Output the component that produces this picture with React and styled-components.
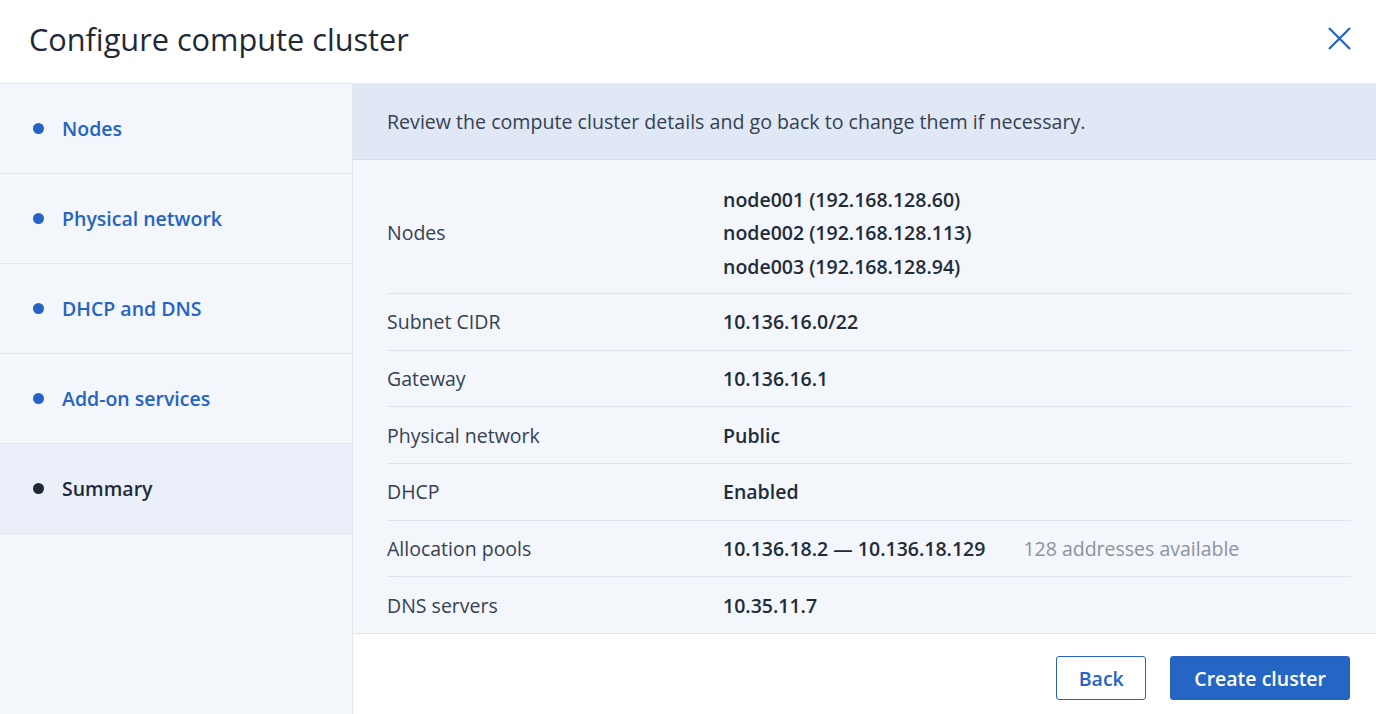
import React from 'react';
import styled, { createGlobalStyle } from 'styled-components';

const GlobalStyle = createGlobalStyle`
  html, body {
    margin: 0;
    padding: 0;
    background: #ffffff;
  }
  body {
    font-family: "Open Sans", "Noto Sans", sans-serif;
    color: #243040;
  }
`;

const Dialog = styled.div`
  width: 1376px;
  height: 714px;
  display: flex;
  flex-direction: column;
  background: #ffffff;
  overflow: hidden;
`;

const Header = styled.header`
  height: 84px;
  flex: 0 0 84px;
  box-sizing: border-box;
  display: flex;
  align-items: center;
  justify-content: space-between;
  padding: 0 25px 6px 29px;
  border-bottom: 1px solid #dfe6f0;
`;

const Title = styled.h1`
  margin: 0;
  font-size: 30.7px;
  font-weight: 400;
  color: #1f2937;
`;

const CloseButton = styled.button`
  border: 0;
  background: transparent;
  padding: 0;
  width: 24px;
  height: 24px;
  display: flex;
  align-items: center;
  justify-content: center;
  cursor: pointer;
`;

const Body = styled.div`
  flex: 1;
  display: flex;
  min-height: 0;
`;

const Sidebar = styled.nav`
  width: 352px;
  flex: 0 0 352px;
  background: #f3f6fb;
  border-right: 1px solid #dfe6f0;
  display: flex;
  flex-direction: column;
`;

const Step = styled.div`
  height: 89px;
  display: flex;
  align-items: center;
  gap: 18px;
  padding-left: 33px;
  border-bottom: 1px solid #dfe6f0;
  background: ${(p) => (p.$active ? '#eaeff9' : 'transparent')};
  color: ${(p) => (p.$active ? '#1f2937' : '#2563c4')};
  font-size: 19.5px;
  font-weight: 600;
`;

const Dot = styled.span`
  width: 11px;
  height: 11px;
  border-radius: 50%;
  background: currentColor;
`;

const Main = styled.section`
  flex: 1;
  display: flex;
  flex-direction: column;
  min-width: 0;
`;

const Banner = styled.div`
  height: 75px;
  flex: 0 0 75px;
  display: flex;
  align-items: center;
  padding-left: 34px;
  background: #dfe8f4;
  border-bottom: 1px solid #cfdcee;
  font-size: 19.6px;
  color: #354152;
`;

const Details = styled.div`
  flex: 1;
  background: #f3f6fb;
  padding: 16px 25px 0 34px;
  border-bottom: 1px solid #dfe6f0;
`;

const Row = styled.div`
  display: grid;
  grid-template-columns: 336px 1fr;
  align-items: center;
  min-height: ${(p) => (p.$tall ? '113px' : '55.67px')};
  padding-bottom: ${(p) => (p.$tall ? '4px' : '0')};
  border-bottom: ${(p) => (p.$last ? 'none' : '1px solid #dde5f0')};
  font-size: 19.5px;
`;

const Label = styled.div`
  color: #354152;
`;

const Value = styled.div`
  display: flex;
  flex-direction: column;
  gap: 6.5px;
  line-height: 27px;
  color: #222b38;
  font-weight: 600;
`;

const Line = styled.div`
  display: flex;
  gap: 38px;
`;

const Muted = styled.span`
  color: #8a93a0;
  font-weight: 400;
`;

const Footer = styled.footer`
  height: 80px;
  flex: 0 0 80px;
  box-sizing: border-box;
  display: flex;
  align-items: flex-end;
  justify-content: flex-end;
  gap: 24px;
  padding: 0 26px 14px 0;
  background: #ffffff;
`;

const Button = styled.button`
  height: 44px;
  padding: 0 ${(p) => (p.$primary ? '23px' : '21.5px')};
  border-radius: 3px;
  border: 1px solid #2563c4;
  background: ${(p) => (p.$primary ? '#2566c4' : '#ffffff')};
  color: ${(p) => (p.$primary ? '#ffffff' : '#2563c4')};
  font-family: inherit;
  font-size: 19.5px;
  font-weight: 600;
  cursor: pointer;
`;

const steps = ['Nodes', 'Physical network', 'DHCP and DNS', 'Add-on services', 'Summary'];

const rows = [
  { label: 'Subnet CIDR', value: '10.136.16.0/22' },
  { label: 'Gateway', value: '10.136.16.1' },
  { label: 'Physical network', value: 'Public' },
  { label: 'DHCP', value: 'Enabled' },
  { label: 'Allocation pools', value: '10.136.18.2 — 10.136.18.129', note: '128 addresses available' },
  { label: 'DNS servers', value: '10.35.11.7' },
];

export default function App() {
  return (
    <>
      <GlobalStyle />
      <Dialog>
        <Header>
          <Title>Configure compute cluster</Title>
          <CloseButton aria-label="Close">
            <svg width="23" height="23" viewBox="0 0 24 24">
              <path d="M1 1 L23 23 M23 1 L1 23" stroke="#2563c4" strokeWidth="2.3" fill="none" />
            </svg>
          </CloseButton>
        </Header>
        <Body>
          <Sidebar>
            {steps.map((s) => (
              <Step key={s} $active={s === 'Summary'}>
                <Dot />
                {s}
              </Step>
            ))}
          </Sidebar>
          <Main>
            <Banner>Review the compute cluster details and go back to change them if necessary.</Banner>
            <Details>
              <Row $tall>
                <Label>Nodes</Label>
                <Value>
                  <div>node001 (192.168.128.60)</div>
                  <div>node002 (192.168.128.113)</div>
                  <div>node003 (192.168.128.94)</div>
                </Value>
              </Row>
              {rows.map((r, i) => (
                <Row key={r.label} $last={i === rows.length - 1}>
                  <Label>{r.label}</Label>
                  <Value>
                    <Line>
                      <span>{r.value}</span>
                      {r.note && <Muted>{r.note}</Muted>}
                    </Line>
                  </Value>
                </Row>
              ))}
            </Details>
            <Footer>
              <Button>Back</Button>
              <Button $primary>Create cluster</Button>
            </Footer>
          </Main>
        </Body>
      </Dialog>
    </>
  );
}
